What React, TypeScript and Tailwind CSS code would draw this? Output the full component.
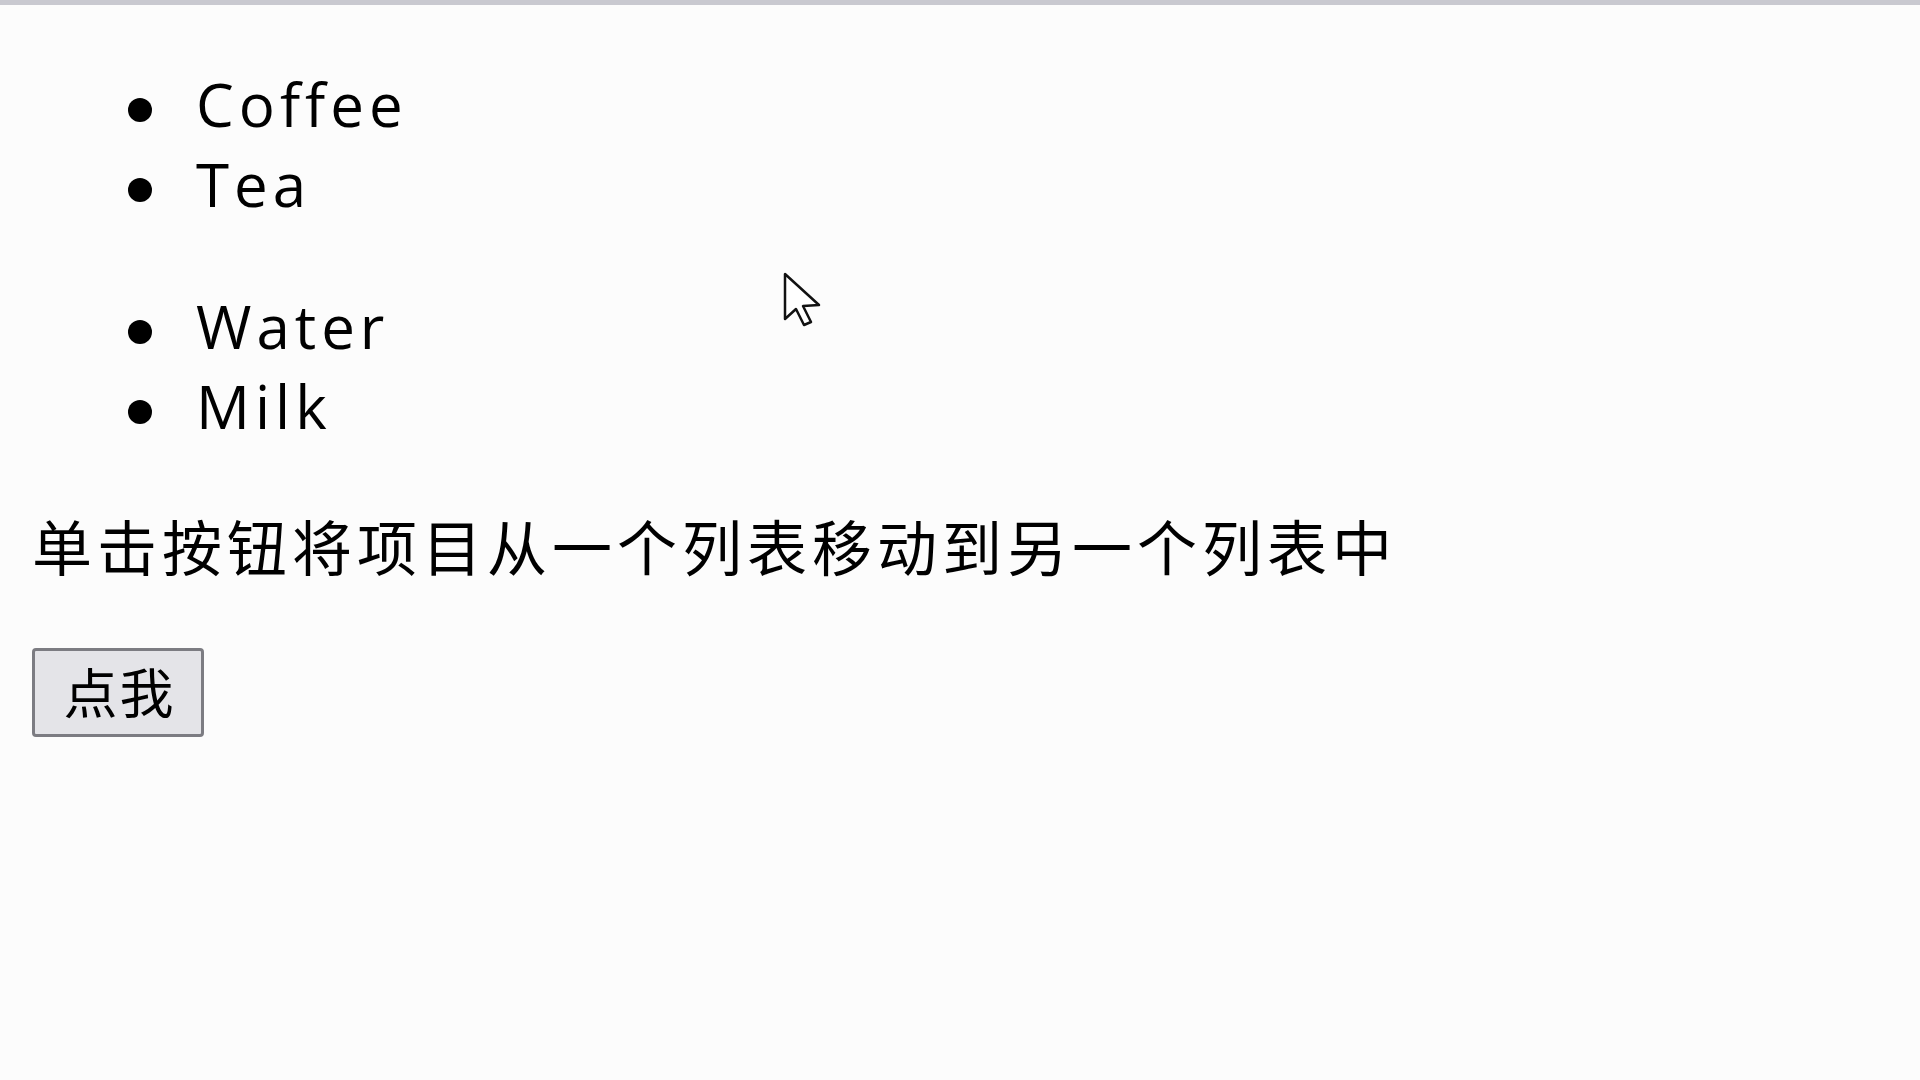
const drinksA = ['Coffee', 'Tea'];
const drinksB = ['Water', 'Milk'];

function DrinkList({ items, className = '' }: { items: string[]; className?: string }) {
  return (
    <ul className={`pl-[96px] ${className}`}>
      {items.map((item) => (
        <li key={item} className="flex h-[80px] items-start leading-[80px]">
          <span className="mt-[34px] mr-[44px] h-[24px] w-[24px] shrink-0 rounded-full bg-black" />
          <span>{item}</span>
        </li>
      ))}
    </ul>
  );
}

function Cursor() {
  return (
    <svg
      className="absolute left-[783px] top-[272px]"
      width="42"
      height="56"
      viewBox="0 0 42 56"
    >
      <path
        d="M2 2 L2 47 L13 37 L21 53 L28 50 L20 34 L36 33 Z"
        fill="#ffffff"
        stroke="#111111"
        strokeWidth="2.5"
        strokeLinejoin="round"
      />
    </svg>
  );
}

export default function App() {
  return (
    <div
      className="relative min-h-screen bg-[#fcfcfc] text-[60px] tracking-[5px] text-black"
      style={{ fontFamily: '"Open Sans", "Noto Sans CJK SC", sans-serif' }}
    >
      <div className="h-[5px] bg-[#c9c9d0]" />
      <div className="px-[32px] pt-[59px]">
        <DrinkList items={drinksA} />
        <DrinkList items={drinksB} className="mt-[62px]" />
        <p className="mt-[62px] leading-[80px]">单击按钮将项目从一个列表移动到另一个列表中</p>
        <button className="mt-[60px] flex h-[89px] w-[172px] items-center justify-center rounded-[4px] border-[3px] border-[#7c7c82] bg-[#e4e4e8] pl-[3px] text-[54px] leading-none tracking-[2px]">
          点我
        </button>
      </div>
      <Cursor />
    </div>
  );
}
